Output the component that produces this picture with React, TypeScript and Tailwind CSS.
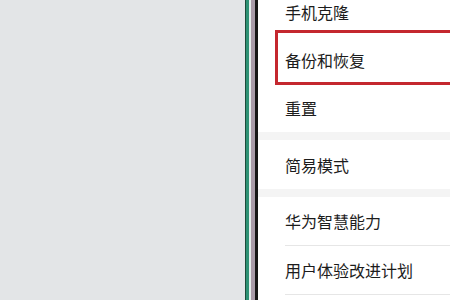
export default function App() {
  const font = { fontFamily: '"Noto Sans CJK SC", "Noto Sans", sans-serif' }

  return (
    <div className="flex h-[300px] w-[450px] overflow-hidden bg-[#e3e5e7]" style={font}>
      <div className="w-[245px] shrink-0 bg-[#e3e5e7]" />

      {/* phone edge */}
      <div className="w-px shrink-0 bg-[#1d4b3b]" />
      <div className="w-[3px] shrink-0 bg-[#2e9174]" />
      <div className="w-[2px] shrink-0 bg-[#e6eeec]" />
      <div className="w-[4px] shrink-0 bg-[#a99ca9]" />
      <div className="w-[3px] shrink-0 bg-[#161616]" />

      {/* settings list */}
      <div className="flex flex-1 flex-col bg-white">
        <div className="-mt-3 flex h-12 shrink-0 items-center pl-[27px] text-[16px] text-[#1c1c1c]">
          手机克隆
        </div>

        <div className="relative flex h-12 shrink-0 items-center pl-[27px] text-[16px] text-[#1c1c1c]">
          备份和恢复
          <div className="absolute -top-[6px] -bottom-px left-[17px] -right-4 border-[3px] border-[#c4282f]" />
        </div>

        <div className="flex h-12 shrink-0 items-center pl-[27px] text-[16px] text-[#1c1c1c]">
          重置
        </div>

        <div className="h-2 shrink-0 bg-[#f4f4f4]" />

        <div className="flex h-[49px] shrink-0 items-center pl-[27px] text-[16px] text-[#1c1c1c]">
          简易模式
        </div>

        <div className="h-2 shrink-0 bg-[#f4f4f4]" />

        <div className="pl-[27px]">
          <div className="flex h-[49px] items-center border-b border-[#e6e6e6] text-[16px] text-[#1c1c1c]">
            华为智慧能力
          </div>
          <div className="flex h-[49px] items-center border-b border-[#e6e6e6] text-[16px] text-[#1c1c1c]">
            用户体验改进计划
          </div>
        </div>
      </div>
    </div>
  )
}
